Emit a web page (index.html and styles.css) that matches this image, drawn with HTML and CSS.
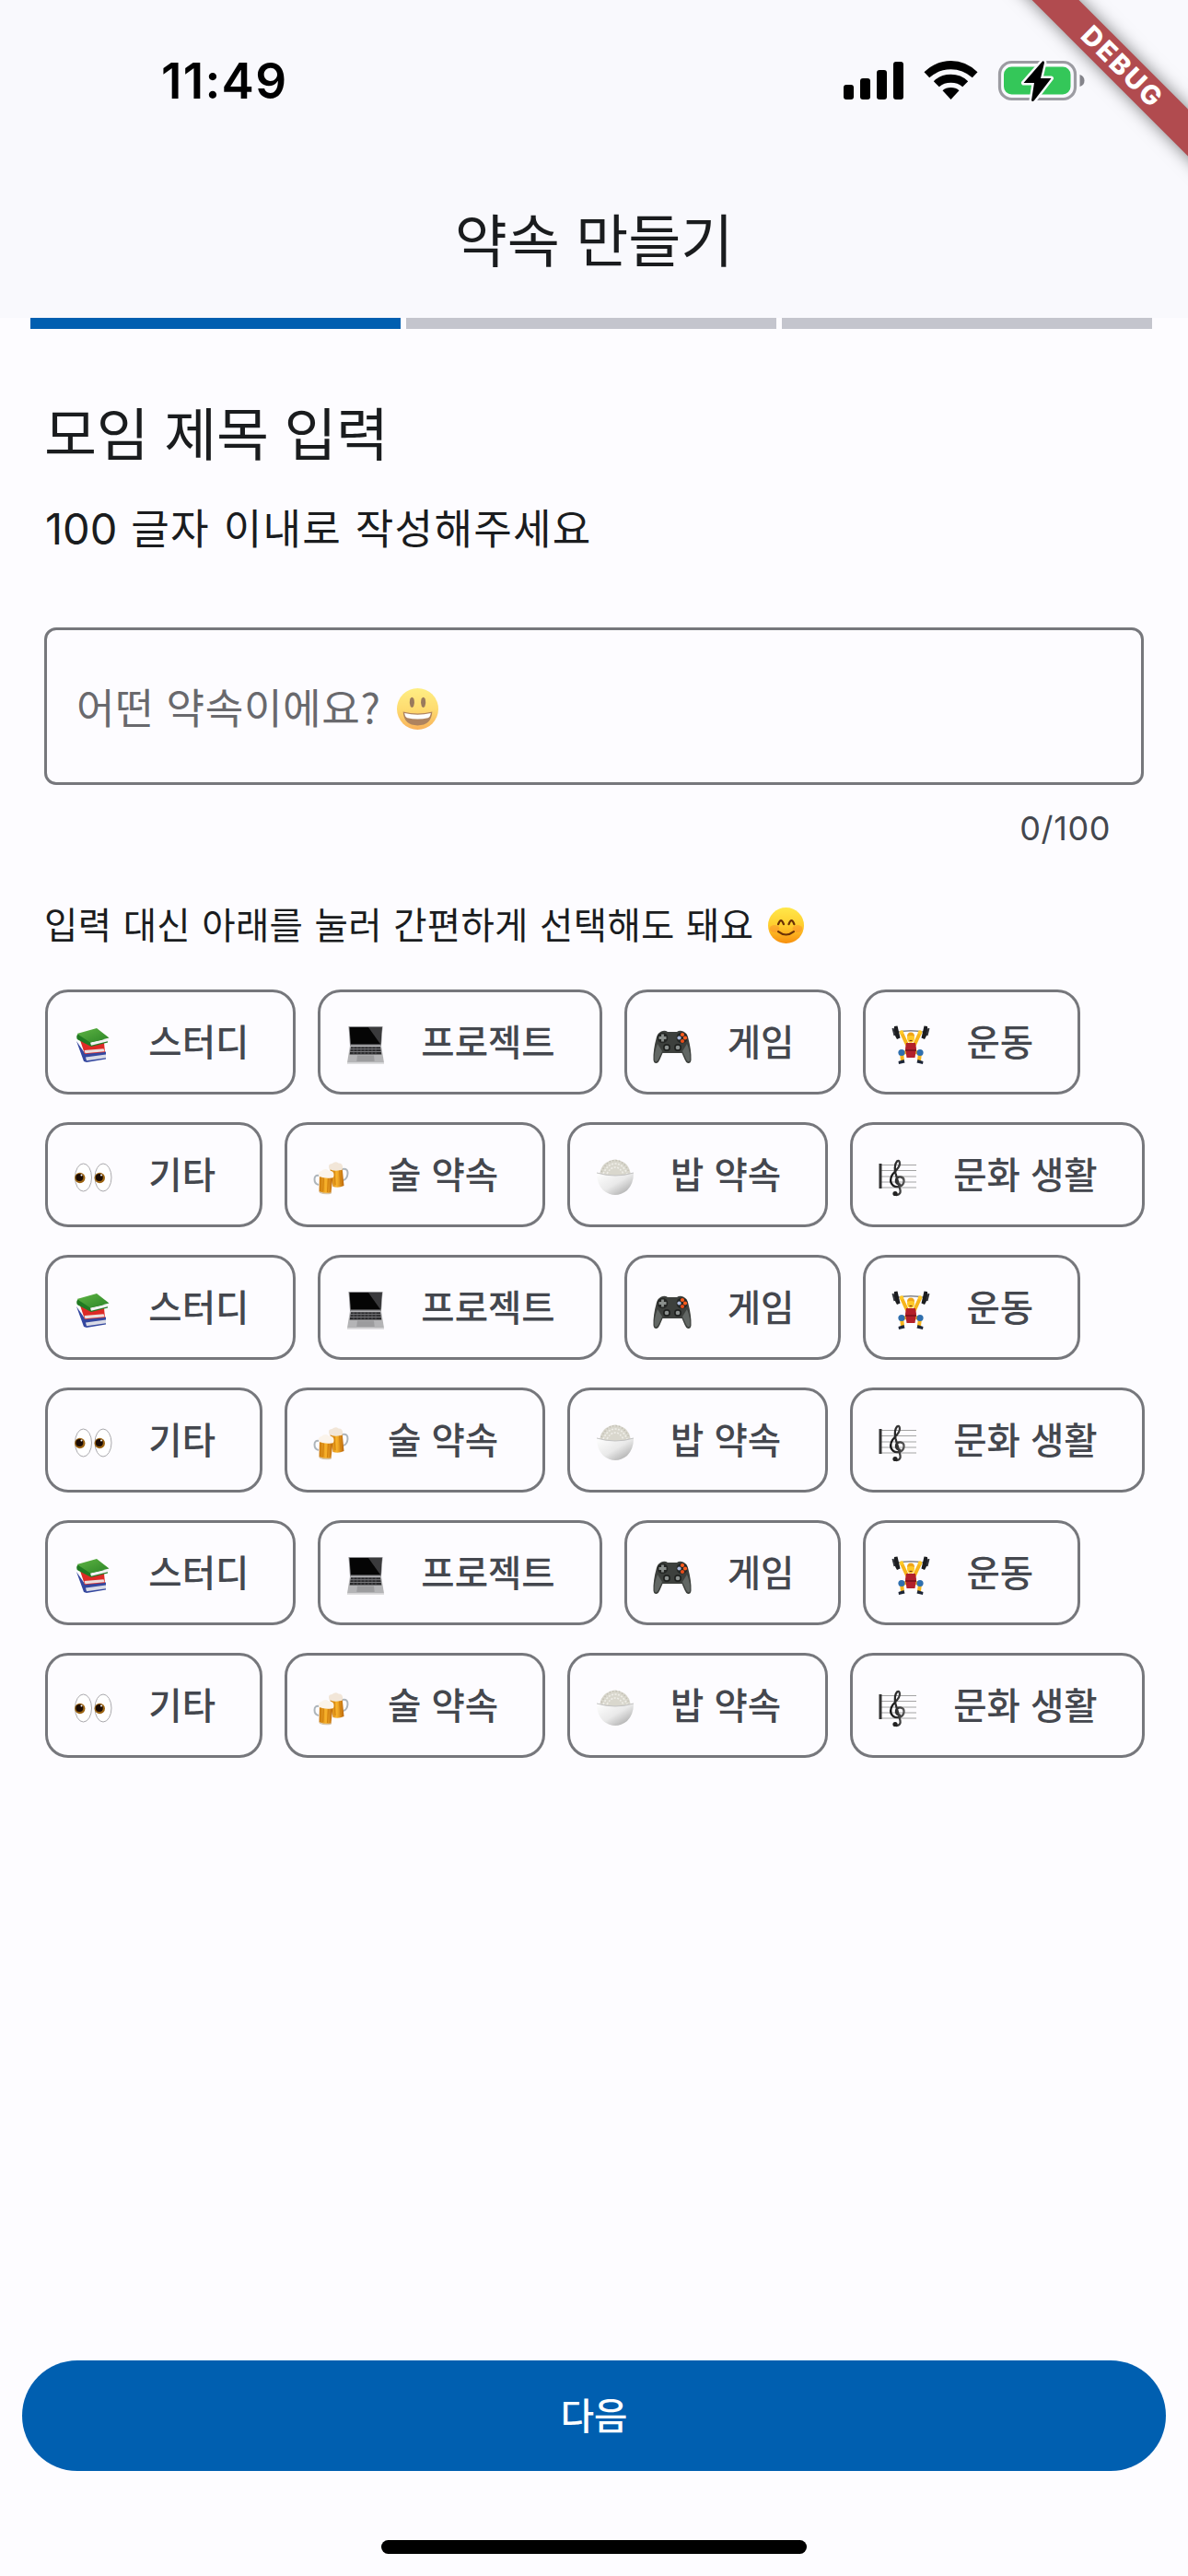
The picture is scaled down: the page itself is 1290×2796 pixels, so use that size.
FILE: index.html
```html
<!DOCTYPE html>
<html lang="ko">
<head>
<meta charset="utf-8">
<title>약속 만들기</title>
<link rel="stylesheet" href="styles.css">
</head>
<body>
<svg class="defs" width="0" height="0" aria-hidden="true">
  <defs>
    <linearGradient id="g-face" x1="0" y1="0" x2="0" y2="1"><stop offset="0" stop-color="#ffe84a"/><stop offset=".5" stop-color="#ffcd2e"/><stop offset="1" stop-color="#f78f0e"/></linearGradient>
    <linearGradient id="g-beer" x1="0" y1="0" x2="1" y2="0"><stop offset="0" stop-color="#c9780c"/><stop offset=".5" stop-color="#f9b42c"/><stop offset="1" stop-color="#b9640a"/></linearGradient>
    <linearGradient id="g-bowl" x1="0" y1="0" x2="1" y2="1"><stop offset="0" stop-color="#ffffff"/><stop offset=".5" stop-color="#e9e9e9"/><stop offset="1" stop-color="#9c9c9c"/></linearGradient>
    <linearGradient id="g-green" x1="0" y1="0" x2="1" y2="1"><stop offset="0" stop-color="#5fb544"/><stop offset="1" stop-color="#2c8527"/></linearGradient>
    <linearGradient id="g-clef" x1="0" y1="0" x2="1" y2="0"><stop offset="0" stop-color="#111"/><stop offset="1" stop-color="#555"/></linearGradient>

    <symbol id="i-books" viewBox="0 0 42 42">
      <path d="M3 17l9 13 23-1.500v8L14 40l-3-1z" fill="#34479f"/>
      <path d="M13 34.500L35 31.500v3.800L14 38.300z" fill="#d9dbe6"/>
      <path d="M7 16l5 15 22-2-1-10z" fill="#dd2a26"/>
      <path d="M11.500 27l21-1.800 1 3L12.500 30.300z" fill="#eadfdd"/>
      <path d="M4.500 9.500c-2 2-1.500 4.500 0 6l14.500 7.500 18-4.500v-2z" fill="#207a22"/>
      <path d="M18 18.500l20-4.200-1 3-18 4.500z" fill="#f3f3f3"/>
      <path d="M3.500 9L25 3l13.500 10.500L18 18.500z" fill="url(#g-green)"/>
    </symbol>
    <symbol id="i-laptop" viewBox="0 0 42 42">
      <path d="M2.500 1h37l-1.500 21H4z" fill="#8d8d90"/>
      <path d="M3.500 2h35l-1.300 18.500H4.800z" fill="#050505"/>
      <path d="M24 2h14.500l-1.300 18.500z" fill="#3a3a3c"/>
      <path d="M4 22h34l3 18.500H1z" fill="#b4b4b6"/>
      <path d="M5 23.200h32l1.300 8.300H3.700z" fill="#29292b"/>
      <path d="M4.500 25.700h33M4 28.500h34" stroke="#8d8d90" stroke-width=".8"/>
      <path d="M8 23v8M12 23v8M16 23v8M20 23v8M24 23v8M28 23v8M32 23v8" stroke="#77777a" stroke-width=".6"/>
      <path d="M12 32.500h18l.7 6.500H11.300z" fill="#9c9c9e"/>
      <path d="M1 40.200h40v1.600H1z" fill="#d5d5d6"/>
    </symbol>
    <symbol id="i-game" viewBox="0 0 42 42">
      <path d="M9 6.500Q13 5 16 7h10q3-2 7-.5 4 2 5 6 4 15 3.500 25-.5 4-3.500 3.500-2-.3-3.500-4L31.500 30h-21L7.500 37q-1.500 3.700-3.500 4-3 .5-3.500-3.500Q0 27 4 12.500q1-4 5-6z" fill="#3d403d"/>
      <path d="M5 20Q1 30 1.800 38q1.500 3 4-1L10 28zM37 20q4 10 3.200 18-1.500 3-4-1L32 28z" fill="#626764"/>
      <circle cx="10.500" cy="13.500" r="5.800" fill="#252725"/><circle cx="31.500" cy="13.500" r="6" fill="#252725"/>
      <path d="M10.500 9.500v8M6.500 13.500h8" stroke="#8b908d" stroke-width="2.800"/>
      <circle cx="32" cy="10" r="2.100" fill="#ff5c1c"/><circle cx="35" cy="13.500" r="2.100" fill="#ff5c1c"/><circle cx="32" cy="17" r="2.100" fill="#e84d1b"/><circle cx="28.500" cy="13.500" r="2.100" fill="#a9b6d8"/>
      <circle cx="15" cy="24" r="4" fill="#202220"/><circle cx="27" cy="24" r="4" fill="#202220"/>
      <circle cx="15" cy="24" r="2.300" fill="#8c918f"/><circle cx="27" cy="24" r="2.300" fill="#8c918f"/>
    </symbol>
    <symbol id="i-lift" viewBox="0 0 42 42">
      <path d="M5 7.500Q21 4 37 7.500" fill="none" stroke="#85878c" stroke-width="1.300"/>
      <path d="M3 1l3.500-.5 3 13-3.500 1.500Q2 9 3 1zM39 1l-3.500-.5-3 13 3.500 1.500Q40 9 39 1z" fill="#1b1c1f"/>
      <path d="M1.500 3l2 8M40.500 3l-2 8" stroke="#303238" stroke-width="2"/>
      <path d="M11 8l6 13M31 8l-6 13" stroke="#f6b51c" stroke-width="4" stroke-linecap="round"/>
      <circle cx="11" cy="7.500" r="2.200" fill="#ffc928"/><circle cx="31" cy="7.500" r="2.200" fill="#ffc928"/>
      <path d="M16 29l-5 1 1 8M26 29l5 1-1 8" fill="none" stroke="#f6b51c" stroke-width="4"/>
      <path d="M16 19h10l1 6-1.500 10h-9L15 25z" fill="#b3202a"/>
      <path d="M15 27h12" stroke="#7c121b" stroke-width="1.600"/>
      <circle cx="11" cy="29.500" r="3.600" fill="#2f6fae"/><circle cx="31" cy="29.500" r="3.600" fill="#2f6fae"/>
      <path d="M7.500 39l6-2 1 3.500-6.500 1.500zM34.500 39l-6-2-1 3.500 6.500 1.500z" fill="#1d2638"/>
      <ellipse cx="21" cy="13.500" rx="4" ry="5.300" fill="#ffc928"/>
      <path d="M17 12q0-4.500 4-4.500t4 4.500q-4-2-8 0z" fill="#f0a415"/>
      <path d="M19.500 16.500h3" stroke="#7a3b10" stroke-width="1.200"/>
    </symbol>
    <symbol id="i-eyes" viewBox="0 0 42 42">
      <ellipse cx="10.500" cy="21" rx="9" ry="15" fill="#fff" stroke="#aaa9ad" stroke-width="1"/>
      <ellipse cx="32" cy="21" rx="9" ry="15" fill="#fff" stroke="#aaa9ad" stroke-width="1"/>
      <circle cx="6.800" cy="21.500" r="5.700" fill="#9c6412"/><circle cx="28.300" cy="21.500" r="5.700" fill="#9c6412"/>
      <circle cx="6.300" cy="21" r="4" fill="#1c0d05"/><circle cx="27.800" cy="21" r="4" fill="#1c0d05"/>
      <circle cx="8.500" cy="18.500" r="1" fill="#fff"/><circle cx="30" cy="18.500" r="1" fill="#fff"/>
    </symbol>
    <symbol id="i-beer" viewBox="0 0 42 42">
      <path d="M32 12q6-1 5.500 5T32.500 24" fill="none" stroke="#aeb5bb" stroke-width="2"/>
      <path d="M18 9h13.500l2 21q-6 3-12 1z" fill="url(#g-beer)"/>
      <path d="M23 14l1 15M28.500 13l1.500 15" stroke="#d5840f" stroke-width="1.200"/>
      <path d="M17.500 12q-2-6 3-6 4-3 7-.5 5 0 4.500 5 0 3-2 2.500-7 2-12.500-1z" fill="#f2e6d8"/>
      <path d="M6.500 19q-5-1-5 4t4.500 6" fill="none" stroke="#aeb5bb" stroke-width="2"/>
      <path d="M7 17l14.500 2-2 19q-7 1.500-13-1.500z" fill="url(#g-beer)"/>
      <path d="M11.500 21l-.8 15M16.500 22l-1 15" stroke="#d5840f" stroke-width="1.200"/>
      <path d="M6.500 20q-2-5 2.500-6 4-3.500 8-.5 5.500 0 5.500 4.500 0 4-2.500 3.500-7 1-13.500-1.500z" fill="#fbf4eb"/>
      <path d="M7 37q6 2.500 12.500 1" fill="none" stroke="#d6c7ae" stroke-width="1.400"/>
    </symbol>
    <symbol id="i-rice" viewBox="0 0 42 42">
      <path d="M4 19Q5 9 11 5q10-7 20 0 6 4 7 14-17 5-34 0z" fill="#d9d7cd"/>
      <path d="M6 15Q12 2.500 21 2.500T36 15" fill="none" stroke="#c3c0b5" stroke-width="1.500" stroke-dasharray="1.500 2"/>
      <path d="M8 17Q13 6 21 6t13 11M12 17q4-7 9-7t9 7" fill="none" stroke="#efeee8" stroke-width="1.600" stroke-dasharray="2 1.500"/>
      <path d="M1 16q20 6 40 0 0 12-7 19-13 10-26 0Q1 28 1 16z" fill="url(#g-bowl)"/>
      <path d="M1 16q20 6 40 0" fill="none" stroke="#bdbdbd" stroke-width=".9"/>
    </symbol>
    <symbol id="i-score" viewBox="0 0 42 42">
      <path d="M1 7.500h40M1 13.500h40M1 20h40M1 26h40M1 32h40" stroke="#a3a3a3" stroke-width="1.200"/>
      <path d="M2 6v27" stroke="#333" stroke-width="3"/>
      <path d="M23 28.500q-4.500-.5-4-4.500t5-3.500q4 .5 3.500 5t-6 5.500-8-4.500q-1.500-6 4-11.500 6-6 5.500-9.500-.5-4-3-2-3.500 4-1.500 13l5 18q1 5-4 5.500" fill="none" stroke="url(#g-clef)" stroke-width="2.300" stroke-linecap="round"/>
      <circle cx="18" cy="38.500" r="2.600" fill="#222"/>
    </symbol>
  </defs>
</svg>

<main class="screen">
  <header class="app-bar">
    <div class="status">
      <span class="time">11:49</span>
      <svg class="indicators" viewBox="0 0 262 46" width="262" height="46" aria-hidden="true">
        <g>
          <rect x="0" y="27" width="11" height="16" rx="3"/><rect x="18" y="20" width="11" height="23" rx="3"/><rect x="36" y="11" width="11" height="32" rx="3"/><rect x="54" y="2" width="11" height="41" rx="3"/>
        </g>
        <path d="M87.500 13.300Q100 1 116.500 1t29 12.300l-5.700 6Q129.500 10.300 116.500 10.300T93.200 19.300z"/>
        <path d="M97.800 23.200Q105.500 15.800 116.500 15.800t18.700 7.400l-6 6Q124 24.800 116.500 24.800T103.800 29.200z"/>
        <path d="M107.500 33.300Q111 30 116.500 30t9 3.300l-9 9.700z"/>
        <rect x="169.500" y="2.500" width="82" height="40" rx="13" fill="none" stroke="#9c9ca2" stroke-width="3.200"/>
        <path d="M256.500 16q5 1.500 5 6.500t-5 6.500z" fill="#85858b"/>
        <rect x="174" y="7.500" width="72.500" height="30" rx="8.500" fill="#34c759"/>
        <path d="M216 1.500L195.500 25h11.500L204 44q1 2 3 0l18.500-24H214l4-17q-.2-2.300-2-1.500z" fill="#000" stroke="#f9f9fd" stroke-width="5" paint-order="stroke" stroke-linejoin="round"/>
      </svg>
    </div>
    <h1 class="title">약속 만들기</h1>
  </header>

  <div class="steps"><i class="step on"></i><i class="step"></i><i class="step"></i></div>

  <section class="form">
    <h2 class="heading">모임 제목 입력</h2>
    <p class="sub"><span class="num">100</span> 글자 이내로 작성해주세요</p>
    <div class="field">
      <span>어떤 약속이에요?</span>
      <svg class="face face-field" viewBox="0 0 44 44" aria-hidden="true">
        <circle cx="22" cy="22" r="22" fill="url(#g-face)"/>
        <ellipse cx="16" cy="15" rx="2.500" ry="5.500" fill="#6b3d10"/><ellipse cx="28" cy="15" rx="2.500" ry="5.500" fill="#6b3d10"/>
        <path d="M6.500 25q15.500 4 31 0-1 14.500-15.500 14.500T6.500 25z" fill="#8a4a14"/>
        <path d="M8 26.300q14 3.500 28 0-.5 4-3 5.200-11 2.500-22 0-2.500-1.200-3-5.200z" fill="#fff"/>
      </svg>
    </div>
    <p class="counter">0/100</p>
    <p class="hint"><span>입력 대신 아래를 눌러 간편하게 선택해도 돼요</span>
      <svg class="face face-hint" viewBox="0 0 44 44" aria-hidden="true">
        <circle cx="22" cy="22" r="22" fill="url(#g-face)"/>
        <ellipse cx="8" cy="26" rx="6" ry="4.500" fill="#f9832d" opacity=".4"/><ellipse cx="36" cy="26" rx="6" ry="4.500" fill="#f9832d" opacity=".4"/>
        <path d="M12.500 20.500q3.300-9 6.600 0M25.400 20.500q3.300-9 6.600 0" fill="none" stroke="#6b3206" stroke-width="2.600" stroke-linecap="round"/>
        <path d="M12.500 29.500q9.500 7.500 19 0" fill="none" stroke="#6b3206" stroke-width="2.400" stroke-linecap="round"/>
      </svg>
    </p>

    <div class="chips">
      <div class="row">
        <button class="chip"><svg><use href="#i-books"/></svg>스터디</button>
        <button class="chip"><svg><use href="#i-laptop"/></svg>프로젝트</button>
        <button class="chip"><svg><use href="#i-game"/></svg>게임</button>
        <button class="chip"><svg><use href="#i-lift"/></svg>운동</button>
      </div>
      <div class="row">
        <button class="chip"><svg><use href="#i-eyes"/></svg>기타</button>
        <button class="chip"><svg><use href="#i-beer"/></svg>술 약속</button>
        <button class="chip"><svg><use href="#i-rice"/></svg>밥 약속</button>
        <button class="chip"><svg><use href="#i-score"/></svg>문화 생활</button>
      </div>
      <div class="row">
        <button class="chip"><svg><use href="#i-books"/></svg>스터디</button>
        <button class="chip"><svg><use href="#i-laptop"/></svg>프로젝트</button>
        <button class="chip"><svg><use href="#i-game"/></svg>게임</button>
        <button class="chip"><svg><use href="#i-lift"/></svg>운동</button>
      </div>
      <div class="row">
        <button class="chip"><svg><use href="#i-eyes"/></svg>기타</button>
        <button class="chip"><svg><use href="#i-beer"/></svg>술 약속</button>
        <button class="chip"><svg><use href="#i-rice"/></svg>밥 약속</button>
        <button class="chip"><svg><use href="#i-score"/></svg>문화 생활</button>
      </div>
      <div class="row">
        <button class="chip"><svg><use href="#i-books"/></svg>스터디</button>
        <button class="chip"><svg><use href="#i-laptop"/></svg>프로젝트</button>
        <button class="chip"><svg><use href="#i-game"/></svg>게임</button>
        <button class="chip"><svg><use href="#i-lift"/></svg>운동</button>
      </div>
      <div class="row">
        <button class="chip"><svg><use href="#i-eyes"/></svg>기타</button>
        <button class="chip"><svg><use href="#i-beer"/></svg>술 약속</button>
        <button class="chip"><svg><use href="#i-rice"/></svg>밥 약속</button>
        <button class="chip"><svg><use href="#i-score"/></svg>문화 생활</button>
      </div>
    </div>
  </section>

  <footer class="footer">
    <button class="next">다음</button>
    <div class="home"></div>
  </footer>

  <div class="ribbon-clip"><div class="ribbon">DEBUG</div></div>
</main>
</body>
</html>
```
FILE: styles.css
```css
* {
  box-sizing: border-box;
  margin: 0;
  padding: 0;
}

body {
  background: #fdfcff;
  color: #1a1c1e;
  font-family: "Noto Sans CJK KR", sans-serif;
}

button {
  background: none;
  border: 0;
  font: inherit;
  color: inherit;
}

.defs {
  position: absolute;
}

.screen {
  position: relative;
  display: flex;
  flex-direction: column;
  width: 1290px;
  height: 2796px;
  overflow: hidden;
}

/* App bar */
.app-bar {
  height: 345px;
  background: #f9f9fd;
}

.status {
  display: flex;
  align-items: center;
  justify-content: space-between;
  height: 176px;
  padding: 0 112px 0 175px;
  color: #000;
}

.time {
  font: 600 53px/60px Inter, sans-serif;
  letter-spacing: 1.3px;
}

.title {
  text-align: center;
  font-size: 62px;
  font-weight: 400;
  line-height: 165px;
}

/* Progress */
.steps {
  display: flex;
  gap: 6px;
  padding: 0 39px 0 33px;
}

.step {
  flex: 1;
  height: 12px;
  background: #c4c5cd;
}

.step.on {
  background: #005fb0;
}

/* Form */
.form {
  flex: 1;
  padding: 71px 48px 0;
}

.heading {
  font-size: 62px;
  font-weight: 400;
  line-height: 80px;
  letter-spacing: -.4px;
}

.sub {
  height: 60px;
  margin-top: 34px;
  padding-left: 1px;
  font-size: 45.2px;
  line-height: 60px;
  letter-spacing: 1.2px;
  word-spacing: 1px;
}

.num {
  font: 400 47px/60px Inter, sans-serif;
  letter-spacing: 0;
}

.field {
  display: flex;
  align-items: center;
  gap: 17px;
  height: 171px;
  margin-top: 79px;
  padding-left: 32px;
  border: 3px solid #76777c;
  border-radius: 13px;
  color: #69696d;
  font-size: 45.2px;
  line-height: 60px;
  letter-spacing: .6px;
}

.face {
  display: block;
  flex: none;
}

.face-field {
  width: 45px;
  height: 45px;
  margin-top: 5px;
  opacity: .68;
}

.counter {
  margin-top: 25px;
  padding-right: 36px;
  text-align: right;
  color: #44474e;
  font: 400 36px/44px Inter, sans-serif;
  letter-spacing: .6px;
}

.hint {
  display: flex;
  align-items: center;
  gap: 16px;
  height: 50px;
  margin-top: 56px;
  font-size: 39.5px;
  line-height: 50px;
  letter-spacing: .3px;
  word-spacing: 1px;
}

.face-hint {
  width: 39px;
  height: 39px;
  margin-top: 4px;
}

.chips {
  display: flex;
  flex-direction: column;
  gap: 30px;
  margin-top: 47px;
  padding-left: 1.300px;
}

.row {
  display: flex;
  gap: 24px;
}

.chip {
  display: flex;
  align-items: center;
  height: 114px;
  padding: 0 48px 4px 28px;
  border: 3px solid #76777c;
  border-radius: 25px;
  color: #44474e;
  font-size: 39.5px;
  font-weight: 500;
  line-height: 50px;
  white-space: nowrap;
}

.chip svg {
  flex: none;
  width: 42px;
  height: 42px;
  margin: 9px 39px 0 0;
}

/* Footer */
.footer {
  display: flex;
  flex-direction: column;
  align-items: center;
  padding: 0 24px 24px;
}

.next {
  width: 100%;
  height: 120px;
  padding-bottom: 4px;
  border-radius: 60px;
  background: #005fb0;
  color: #fff;
  font-size: 39.5px;
  font-weight: 500;
  line-height: 50px;
}

.home {
  width: 462px;
  height: 15px;
  margin-top: 75px;
  border-radius: 8px;
  background: #000;
}

/* Corner ribbon, over the status bar */
.ribbon-clip {
  position: absolute;
  top: 0;
  right: 0;
  width: 240px;
  height: 240px;
  overflow: hidden;
}

.ribbon {
  position: absolute;
  top: 54px;
  left: 18px;
  width: 300px;
  height: 36px;
  transform: rotate(45deg);
  background: #b14b4f;
  box-shadow: 0 0 18px rgba(0, 0, 0, .5);
  color: #fff;
  text-align: center;
  text-indent: 2px;
  font: 800 29px/36px Inter, sans-serif;
  letter-spacing: 2.200px;
}
```
